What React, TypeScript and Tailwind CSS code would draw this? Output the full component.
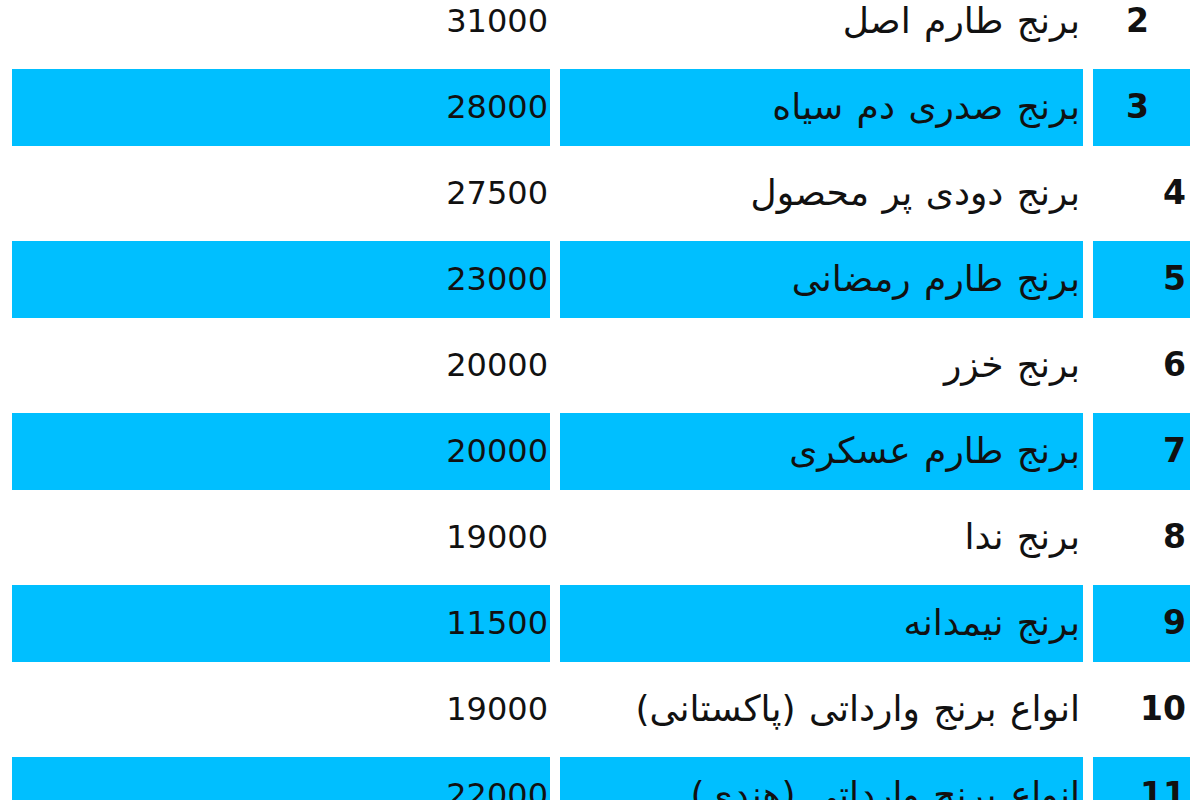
const rows = [
  { n: 2, name: 'برنج طارم اصل', price: '31000' },
  { n: 3, name: 'برنج صدری دم سیاه', price: '28000' },
  { n: 4, name: 'برنج دودی پر محصول', price: '27500' },
  { n: 5, name: 'برنج طارم رمضانی', price: '23000' },
  { n: 6, name: 'برنج خزر', price: '20000' },
  { n: 7, name: 'برنج طارم عسکری', price: '20000' },
  { n: 8, name: 'برنج ندا', price: '19000' },
  { n: 9, name: 'برنج نیمدانه', price: '11500' },
  { n: 10, name: 'انواع برنج وارداتی (پاکستانی)', price: '19000' },
  { n: 11, name: 'انواع برنج وارداتی (هندی)', price: '22000' },
];

export default function App() {
  return (
    <div className="min-h-screen bg-white overflow-hidden pl-[2px]">
      <table
        dir="rtl"
        className="-mt-[26.5px] w-[1198px] border-separate [border-spacing:10px_9.25px] text-[#111] text-[32px] font-['DejaVu_Sans',sans-serif]"
      >
        <tbody>
          {rows.map((r) => {
            const bg = r.n % 2 === 1 ? 'bg-[#00bfff]' : '';
            // the first two rows keep their numbers centred
            const numAlign = r.n < 4 ? 'text-center pr-[8px]' : 'text-right pr-[4px]';
            return (
              <tr key={r.n} className="h-[77px]">
                <td className={`w-[97px] font-bold text-[33px] ${numAlign} ${bg}`}>{r.n}</td>
                <td className={`w-[523px] pr-[3px] text-right text-[36px] [word-spacing:2px] ${bg}`}>
                  {r.name}
                </td>
                <td className={`w-[538px] pr-[2px] text-right ${bg}`} dir="ltr">
                  {r.price}
                </td>
              </tr>
            );
          })}
        </tbody>
      </table>
    </div>
  );
}
